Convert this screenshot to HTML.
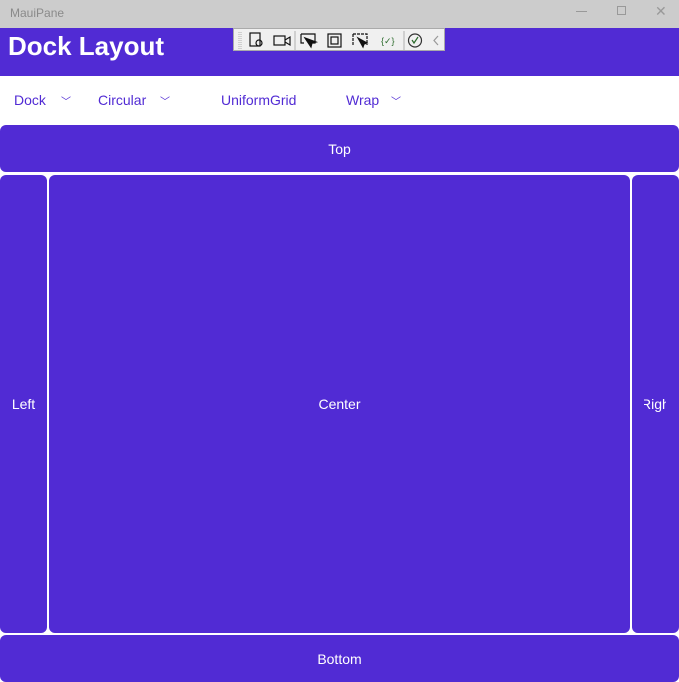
<!DOCTYPE html>
<html><head><meta charset="utf-8"><style>
*{margin:0;padding:0;box-sizing:border-box}
body{width:679px;height:682px;overflow:hidden;background:#fff;font-family:"Segoe UI","Liberation Sans",sans-serif;position:relative}
.tb{position:absolute;left:0;top:0;width:679px;height:28px;background:#cccccc;color:#8a8a8a;font-size:12px}
.hd{position:absolute;left:0;top:28px;width:679px;height:48px;background:#512bd4}
.hd h1{position:absolute;left:8px;top:3px;color:#fff;font-size:26px;font-weight:600}
.tool{position:absolute;left:233px;top:28px;width:212px;height:23px;background:#f0f0f0;border:1px solid #aaa}
.tab{position:absolute;top:92px;color:#512bd4;font-size:14px}
.chev{position:absolute;top:93px;color:#512bd4;font-size:10px}
.b{position:absolute;background:#512bd4;color:#fff;font-size:14px;display:flex;align-items:center;justify-content:center;border-radius:6px;overflow:hidden;white-space:nowrap}
</style></head><body>
<div class="tb"><span style="position:absolute;left:10px;top:6px">MauiPane</span>
<span style="position:absolute;left:576px;top:11px;width:11px;border-top:1px solid #999"></span>
<span style="position:absolute;left:617px;top:6px;width:9px;height:9px;border:1px solid #999"></span>
<span style="position:absolute;left:655px;top:3px;color:#999;font-size:14px">✕</span></div>
<div class="hd"><h1>Dock Layout</h1></div>
<div class="tool">
<svg width="212" height="23" viewBox="0 0 212 23" fill="none" stroke="#111" stroke-width="1.2">
<path d="M5 3v17M7 3v17" stroke="#bbb" stroke-dasharray="1 1"/>
<rect x="16" y="4" width="10" height="13"/><circle cx="25" cy="14" r="3"/>
<rect x="40" y="7" width="11" height="9"/><path d="M51 11l5-3v8l-5-3"/>
<line x1="61" y1="2" x2="61" y2="21" stroke="#bbb"/>
<path d="M67 5h14v9h-4M67 5v9h3"/><path d="M71 9l6 9 1-4 4-1z" fill="#111"/>
<rect x="94" y="5" width="13" height="13"/><rect x="97" y="8" width="7" height="7"/>
<path d="M119 5h14v11M119 5v11" stroke-dasharray="3 1"/><path d="M124 9l5 9 1-3 3-1z" fill="#111"/>
<text x="147" y="15" font-size="9" fill="#2a6a2a" stroke="none">{✓}</text>
<line x1="170" y1="2" x2="170" y2="21" stroke="#bbb"/>
<circle cx="181" cy="11.5" r="6.5" stroke="#333"/><path d="M178 11l2 3 4-6" stroke="#2a6a2a"/>
<path d="M204 7l-4 4.5 4 4.5" stroke="#999"/>
</svg></div>
<span class="tab" style="left:14px">Dock</span><span class="chev" style="left:61px">﹀</span>
<span class="tab" style="left:98px">Circular</span><span class="chev" style="left:160px">﹀</span>
<span class="tab" style="left:221px">UniformGrid</span>
<span class="tab" style="left:346px">Wrap</span><span class="chev" style="left:391px">﹀</span>
<div class="b" style="left:0;top:125px;width:679px;height:47px">Top</div>
<div class="b" style="left:0;top:175px;width:47px;height:458px">Left</div>
<div class="b" style="left:49px;top:175px;width:581px;height:458px">Center</div>
<div class="b" style="left:632px;top:175px;width:47px;height:458px"><span style="position:absolute;left:12px;width:22px;overflow:hidden;display:block;height:20px;line-height:20px"><span style="position:absolute;left:-3px">Right</span></span></div>
<div class="b" style="left:0;top:635px;width:679px;height:47px">Bottom</div>
</body></html>
